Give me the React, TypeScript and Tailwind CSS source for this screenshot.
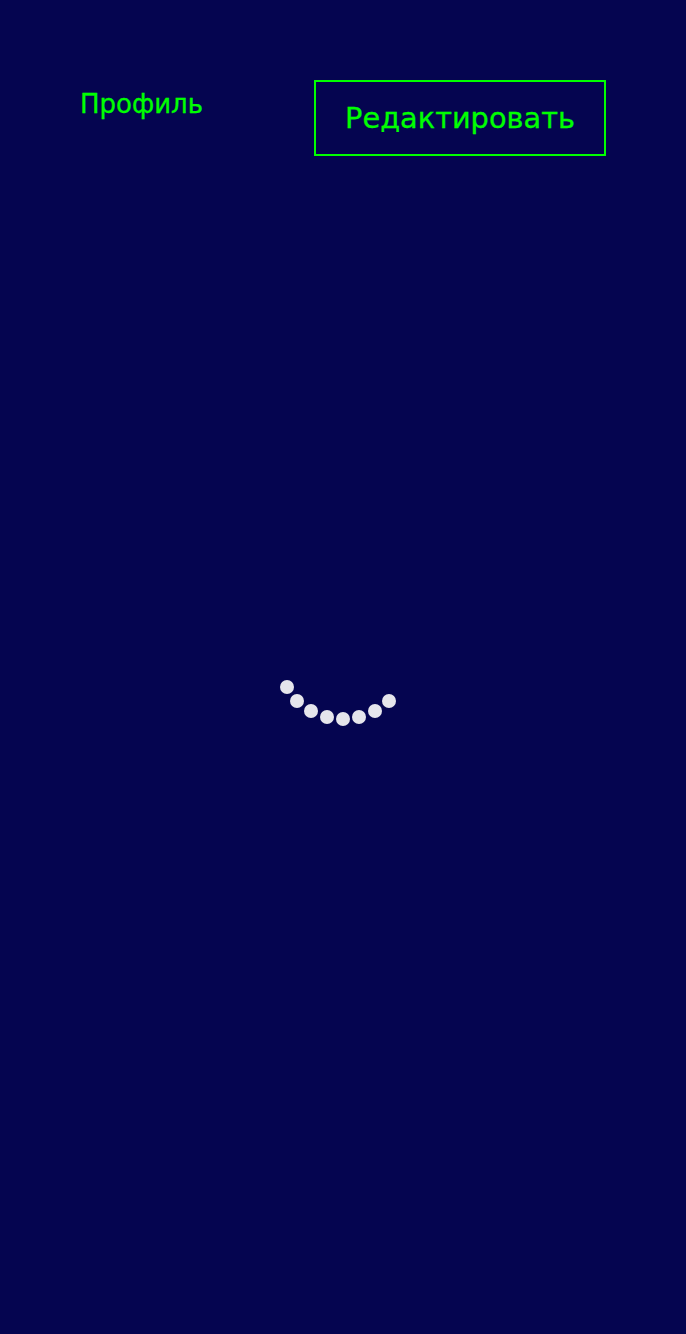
const dots = [
  [287, 687],
  [297, 701],
  [311, 711],
  [327, 717],
  [343, 719],
  [359, 717],
  [375, 711],
  [389, 701],
];

function Spinner() {
  return (
    <svg width="686" height="100" viewBox="0 640 686 100" className="block">
      {dots.map(([cx, cy]) => (
        <circle key={cx} cx={cx} cy={cy} r="7" fill="#e6e6ec" />
      ))}
    </svg>
  );
}

export default function App() {
  return (
    <div className="h-[1334px] w-[686px] overflow-hidden bg-[#050550] font-['DejaVu_Sans',sans-serif] text-[#00ff00] [-webkit-text-stroke:0.3px_#00ff00]">
      <header className="flex items-start justify-between pt-20 pl-20 pr-20">
        <h1 className="pt-[6px] text-[26px] leading-[36px] font-normal">Профиль</h1>
        <button className="h-[76px] w-[292px] border-2 border-[#00ff00] text-center text-[28.8px] leading-[72px]">
          Редактировать
        </button>
      </header>
      <div className="mt-[484px]">
        <Spinner />
      </div>
    </div>
  );
}
